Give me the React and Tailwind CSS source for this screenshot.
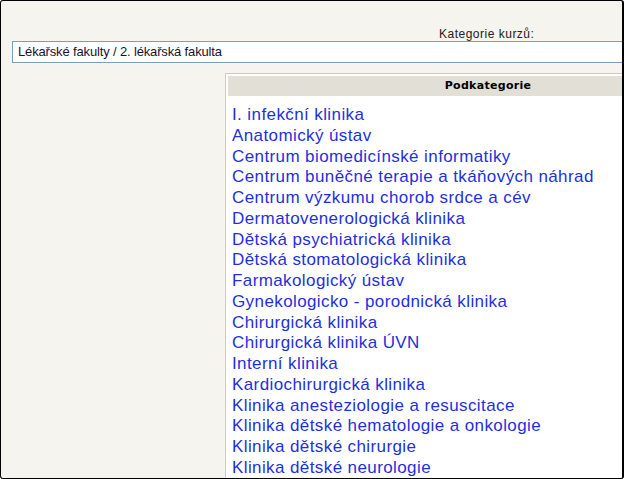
import React from 'react';

const items = [
  'I. infekční klinika',
  'Anatomický ústav',
  'Centrum biomedicínské informatiky',
  'Centrum buněčné terapie a tkáňových náhrad',
  'Centrum výzkumu chorob srdce a cév',
  'Dermatovenerologická klinika',
  'Dětská psychiatrická klinika',
  'Dětská stomatologická klinika',
  'Farmakologický ústav',
  'Gynekologicko - porodnická klinika',
  'Chirurgická klinika',
  'Chirurgická klinika ÚVN',
  'Interní klinika',
  'Kardiochirurgická klinika',
  'Klinika anesteziologie a resuscitace',
  'Klinika dětské hematologie a onkologie',
  'Klinika dětské chirurgie',
  'Klinika dětské neurologie',
];

export default function App() {
  return (
    <div className="w-[624px] h-[479px] overflow-hidden bg-[#f5f4ef] border border-black border-r-2 rounded-[3px] font-['Liberation_Sans',Arial,sans-serif]">
      <div className="pt-[26px] pl-[438px] text-[12px] leading-[14px] tracking-[0.5px] text-[#222]">Kategorie kurzů:</div>
      <div className="ml-[11px] w-[700px] h-[22px] bg-white border border-[#7f9db9] flex items-center pl-[5px] text-[13px] tracking-[-0.15px] text-[#1a1030]">
        Lékařské fakulty / 2. lékařská fakulta
      </div>
      <div className="ml-[224px] mt-[10px] w-[526px] bg-white border border-[#cfcbc0] p-[2px]">
        <div className="h-[20px] bg-[#e2dfd6] flex items-center justify-center font-['DejaVu_Sans',Verdana,sans-serif] font-bold text-[11px] tracking-[0.3px] text-black">
          Podkategorie
        </div>
        <ul className="pt-[9px] pl-[4px] text-[17px] leading-[20.75px] tracking-[0.4px] text-[#1f30dd]">
          {items.map((it) => (
            <li key={it}>
              <a href="#" className="text-[#1f30dd]">{it}</a>
            </li>
          ))}
        </ul>
      </div>
    </div>
  );
}
